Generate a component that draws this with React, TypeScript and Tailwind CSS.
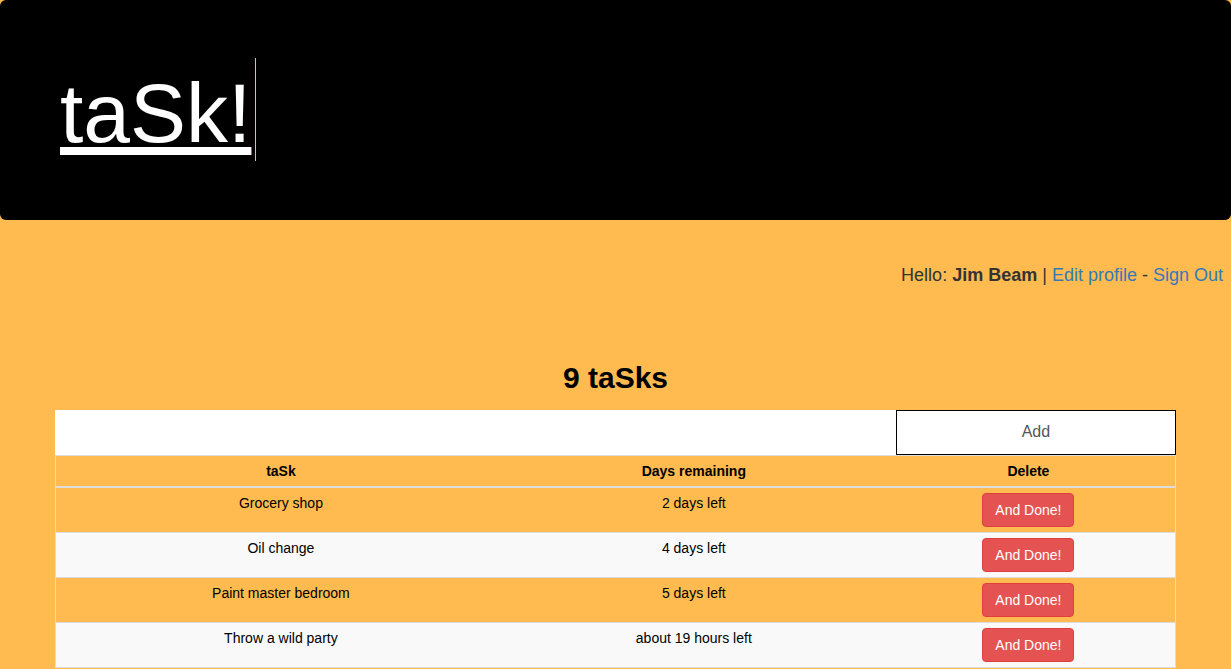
type Task = { name: string; remaining: string };

const tasks: Task[] = [
  { name: "Grocery shop", remaining: "2 days left" },
  { name: "Oil change", remaining: "4 days left" },
  { name: "Paint master bedroom", remaining: "5 days left" },
  { name: "Throw a wild party", remaining: "about 19 hours left" },
];

function Banner() {
  return (
    <header className="rounded-md bg-black px-[60px] pt-[58px] pb-[59px] text-white">
      <h1 className="flex h-[103px] text-[84px] leading-[111px]">
        <span className="underline decoration-8 underline-offset-[5px] [text-decoration-skip-ink:none]">taSk!</span>
        <span className="ml-1 w-px bg-[#ffbb4f]" aria-hidden="true" />
      </h1>
    </header>
  );
}

function AccountBar() {
  return (
    <nav className="mt-10 px-2 text-right text-lg leading-[30px] text-[#333]">
      Hello: <strong>Jim Beam</strong> |{" "}
      <a href="#profile" className="text-[#337ab7]">Edit profile</a> -{" "}
      <a href="#signout" className="text-[#337ab7]">Sign Out</a>
    </nav>
  );
}

function AddTask() {
  return (
    <form className="flex h-[45px]" onSubmit={(e) => e.preventDefault()}>
      <input type="text" aria-label="New task" className="min-w-0 flex-1 bg-white px-3 text-base outline-none" />
      <button type="submit" className="w-1/4 border border-black bg-white pb-[2px] text-base text-[#555]">
        Add
      </button>
    </form>
  );
}

function TaskTable() {
  return (
    <table className="w-full table-fixed border-separate border-spacing-0 border-x border-t border-[#ddd] text-center text-sm text-black">
      <colgroup>
        <col className="w-[40.2%]" />
        <col className="w-[33.6%]" />
        <col className="w-[26.2%]" />
      </colgroup>
      <thead>
        <tr>
          <th className="border-b-2 border-[#ddd] p-[5px]">taSk</th>
          <th className="border-b-2 border-[#ddd] p-[5px]">Days remaining</th>
          <th className="border-b-2 border-[#ddd] p-[5px]">Delete</th>
        </tr>
      </thead>
      <tbody>
        {tasks.map((task) => (
          <tr key={task.name} className="even:bg-[#f9f9f9]">
            <td className="border-b border-[#ddd] p-[5px] align-top">{task.name}</td>
            <td className="border-b border-[#ddd] p-[5px] align-top">{task.remaining}</td>
            <td className="border-b border-[#ddd] p-[5px] align-top">
              <button
                type="button"
                className="mx-auto block h-[34px] rounded border border-[#e03f3f] bg-[#e45351] px-3 text-sm whitespace-nowrap text-white"
              >
                And Done!
              </button>
            </td>
          </tr>
        ))}
      </tbody>
    </table>
  );
}

export default function App() {
  return (
    <div className="min-h-screen bg-[#ffbb4f] font-['Liberation_Sans',Arial,sans-serif]">
      <Banner />
      <AccountBar />
      <main className="mx-[55px] pt-[70px]">
        <h2 className="mb-[14px] text-center text-3xl font-bold text-black">9 taSks</h2>
        <AddTask />
        <TaskTable />
      </main>
    </div>
  );
}
